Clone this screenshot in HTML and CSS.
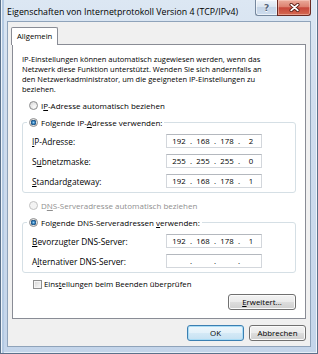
FILE: index.html
```html
<!DOCTYPE html>
<html lang="de">
<head>
<meta charset="utf-8">
<title>Eigenschaften von Internetprotokoll Version 4 (TCP/IPv4)</title>
<link rel="stylesheet" href="styles.css">
</head>
<body>
<div class="window">
  <div class="titlebar">
    <span class="title">Eigenschaften von Internetprotokoll Version 4 (TCP/IPv4)</span>
    <div class="caption">
      <div class="cap help"><span>?</span></div>
      <div class="cap close">
        <svg width="11" height="9" viewBox="0 0 11 9"><path d="M2.2 1.6 L8.8 7.4 M8.8 1.6 L2.2 7.4" stroke="#5a1d14" stroke-width="3.4" stroke-linecap="round" fill="none"/><path d="M2.2 1.6 L8.8 7.4 M8.8 1.6 L2.2 7.4" stroke="#ffffff" stroke-width="1.8" stroke-linecap="round" fill="none"/></svg>
      </div>
    </div>
  </div>
  <div class="client">
    <div class="tabs"><div class="tab">Allgemein</div></div>
    <div class="panel">
      <p class="intro">IP-Einstellungen können automatisch zugewiesen werden, wenn das<br>Netzwerk diese Funktion unterstützt. Wenden Sie sich andernfalls an<br>den Netzwerkadministrator, um die geeigneten IP-Einstellungen zu<br>beziehen.</p>
      <div class="opt-row"><span class="radio"></span><span>I<u>P</u>-Adresse automatisch beziehen</span></div>
      <fieldset class="group">
        <legend class="legend"><span class="radio checked"></span><span>Folgende IP-<u>A</u>dresse verwenden:</span></legend>
        <div class="field-row"><span class="label"><u>I</u>P-Adresse:</span><div class="ipbox"><span class="oct">192</span><span class="dot">.</span><span class="oct">168</span><span class="dot">.</span><span class="oct">178</span><span class="dot">.</span><span class="oct">2</span></div></div>
        <div class="field-row"><span class="label">S<u>u</u>bnetzmaske:</span><div class="ipbox"><span class="oct">255</span><span class="dot">.</span><span class="oct">255</span><span class="dot">.</span><span class="oct">255</span><span class="dot">.</span><span class="oct">0</span></div></div>
        <div class="field-row"><span class="label"><u>S</u>tandardgateway:</span><div class="ipbox"><span class="oct">192</span><span class="dot">.</span><span class="oct">168</span><span class="dot">.</span><span class="oct">178</span><span class="dot">.</span><span class="oct">1</span></div></div>
      </fieldset>
      <div class="opt-row disabled gap-dns"><span class="radio off"></span><span>D<u>N</u>S-Serveradresse automatisch beziehen</span></div>
      <fieldset class="group">
        <legend class="legend"><span class="radio checked"></span><span>Folgende DNS-Serveradressen <u>v</u>erwenden:</span></legend>
        <div class="field-row"><span class="label"><u>B</u>evorzugter DNS-Server:</span><div class="ipbox"><span class="oct">192</span><span class="dot">.</span><span class="oct">168</span><span class="dot">.</span><span class="oct">178</span><span class="dot">.</span><span class="oct">1</span></div></div>
        <div class="field-row"><span class="label">A<u>l</u>ternativer DNS-Server:</span><div class="ipbox"><span class="oct"></span><span class="dot">.</span><span class="oct"></span><span class="dot">.</span><span class="oct"></span><span class="dot">.</span><span class="oct"></span></div></div>
      </fieldset>
      <div class="check-row"><span class="checkbox"></span><span>Eins<u>t</u>ellungen beim Beenden überprüfen</span></div>
      <div class="adv-row"><button class="btn adv"><u>E</u>rweitert...</button></div>
    </div>
    <div class="dialog-buttons">
      <button class="btn default">OK</button>
      <button class="btn">Abbrechen</button>
    </div>
  </div>
</div>
</body>
</html>
```
FILE: styles.css
```css
* { box-sizing: border-box; }
html, body { margin: 0; padding: 0; }
body {
  width: 318px;
  height: 354px;
  overflow: hidden;
  font-family: "Open Sans", "Noto Sans", sans-serif;
  font-size: 8px;
  color: #000;
  background: #c9d7e8;
}
.window {
  width: 318px;
  height: 354px;
  display: flex;
  flex-direction: column;
  padding: 0 6px 6px 6px;
  border: 1px solid #5b718b;
  border-top: none;
  background: linear-gradient(180deg, #dce7f3 0%, #d0ddee 30%, #c4d5ea 100%);
  box-shadow: inset 1px 0 0 #eef4fa, inset 3px 0 0 #b3c9e2, inset -1px 0 0 #eef4fa, inset 0 -1px 0 #e6eef7;
}
.titlebar {
  height: 21px;
  display: flex;
  justify-content: space-between;
  align-items: flex-start;
}
.title {
  margin-top: 6px;
  line-height: 12px;
  font-size: 8.8px;
  white-space: nowrap;
}
.caption { display: flex; }
.cap {
  height: 16px;
  display: flex;
  align-items: center;
  justify-content: center;
}
.help {
  width: 22px;
  border: 1px solid #76889e;
  border-top: none;
  border-right: none;
  border-radius: 0 0 0 3px;
  background: linear-gradient(180deg, #eef3f9 0%, #dbe5f0 45%, #c5d4e6 50%, #cddcee 100%);
  box-shadow: inset 0 0 0 1px rgba(255,255,255,0.6);
  color: #55657a;
  font-family: "DejaVu Sans", sans-serif;
  font-weight: bold;
  font-size: 9px;
  text-shadow: 0 1px 0 #fff;
}
.close {
  width: 34px;
  border: 1px solid #6a2a22;
  border-top: none;
  border-radius: 0 0 3px 0;
  background: linear-gradient(180deg, #eaab9b 0%, #dd8170 45%, #c7473a 52%, #d56a52 100%);
  box-shadow: inset 0 0 0 1px rgba(255,220,210,0.45);
}
.client {
  flex: 1;
  display: flex;
  flex-direction: column;
  background: #f0f0f0;
  border: 1px solid #8fa3ba;
  padding: 5px 4px 5px 4px;
}
.tabs {
  display: flex;
  height: 17px;
}
.tab {
  position: relative;
  z-index: 1;
  margin-left: -1px;
  width: 47px;
  height: 18px;
  border: 1px solid #898c95;
  border-bottom: none;
  border-radius: 2px 2px 0 0;
  background: #fff;
  padding-left: 5px;
  line-height: 16px;
  font-size: 7.7px;
}
.panel {
  height: 275px;
  background: #fff;
  border: 1px solid #898c95;
  padding: 9px 9px 0 9px;
}
.intro {
  margin: 0;
  line-height: 10px;
  font-size: 7.5px;
  white-space: nowrap;
}
.opt-row, .check-row {
  height: 12px;
  display: flex;
  align-items: center;
  white-space: nowrap;
}
.opt-row {
  margin-top: 5px;
  padding-left: 7px;
  gap: 3px;
}
.opt-row.gap-dns { margin-top: 6px; }
.disabled { color: #8f8f8f; }
.radio {
  flex: none;
  width: 9px;
  height: 9px;
  border-radius: 50%;
  border: 1px solid #8b8c8d;
  background: radial-gradient(circle at 65% 70%, #fbfbfb 0%, #e6e6e6 55%, #cfcfcf 100%);
}
.radio.checked {
  background: radial-gradient(circle at 50% 50%, #9ad3f5 0, #3d86c0 1.3px, #1f5686 2.4px, #2a4f70 2.7px, #e4e4e4 3px, #f4f4f4 100%);
}
.radio.off {
  border-color: #c2c2c2;
  background: #f3f3f3;
}
.group {
  margin: 5px 0 0 0;
  padding: 6px 33px 4px 0;
  border: 1px solid #d5dfe5;
  border-radius: 3px;
  min-width: 0;
}
.legend {
  margin-left: 4px;
  padding: 0 2px;
  height: 12px;
  display: flex;
  align-items: center;
  gap: 3px;
  white-space: nowrap;
}
.field-row {
  height: 14px;
  display: flex;
  align-items: center;
  padding-left: 9px;
}
.field-row + .field-row { margin-top: 6px; }
.label { flex: 1; white-space: nowrap; font-size: 8.3px; }
.ipbox {
  width: 96px;
  height: 14px;
  display: flex;
  align-items: center;
  padding-left: 2px;
  background: #fff;
  border: 1px solid #d3d7dc;
  border-top-color: #b4b8be;
  font-size: 7.8px;
}
.oct { width: 20px; text-align: center; }
.dot { width: 4px; text-align: center; }
.check-row {
  margin-top: 5px;
  padding-left: 11px;
  gap: 2px;
  font-size: 7.8px;
}
.checkbox {
  flex: none;
  width: 9px;
  height: 9px;
  border: 1px solid #8e8f8f;
  background: linear-gradient(135deg, #d4d4d4 0%, #f0f0f0 70%, #fbfbfb 100%);
  box-shadow: inset 0 0 0 1px #f4f4f4;
}
.adv-row {
  margin-top: 4px;
  display: flex;
  justify-content: flex-end;
}
.btn {
  font-family: inherit;
  font-size: 7.9px;
  color: #000;
  height: 16px;
  padding: 0;
  border: 1px solid #707070;
  border-radius: 3px;
  background: linear-gradient(180deg, #f2f2f2 0%, #ebebeb 48%, #dddddd 52%, #cfcfcf 100%);
  box-shadow: inset 0 0 0 1px #fbfbfb;
}
.adv { width: 68px; }
.dialog-buttons {
  margin-top: 6px;
  display: flex;
  justify-content: flex-end;
  gap: 5px;
}
.dialog-buttons .btn { width: 57px; }
.btn.default {
  border-color: #3c7fb1;
  box-shadow: inset 0 0 0 1px #a9dcf6;
  background: linear-gradient(180deg, #eef7fc 0%, #e3f1fa 48%, #d4e9f6 52%, #c6e1f2 100%);
}
u { text-decoration: underline; }
```
